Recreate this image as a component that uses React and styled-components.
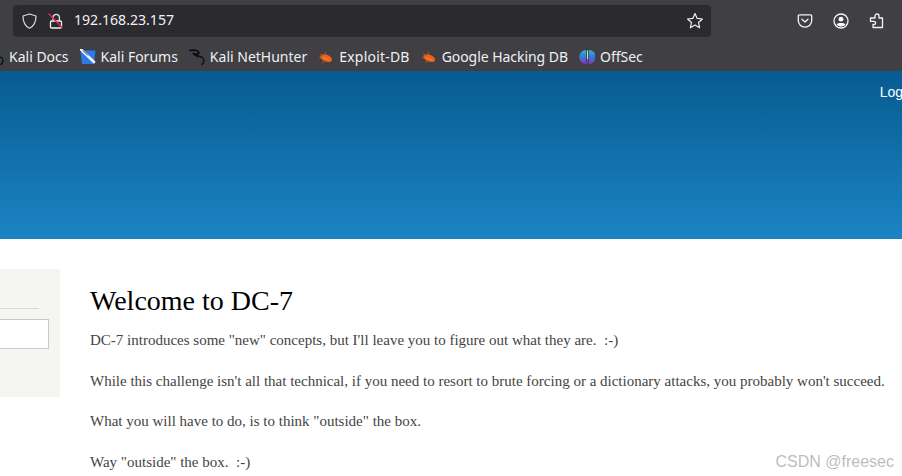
import React from 'react';
import styled, { createGlobalStyle } from 'styled-components';

const Global = createGlobalStyle`
  html, body { margin: 0; padding: 0; background: #fff; overflow: hidden; }
`;

const Page = styled.div`
  position: relative;
  width: 902px;
  height: 476px;
  overflow: hidden;
  display: flex;
  flex-direction: column;
`;

const Browser = styled.div`
  height: 71px;
  flex: none;
  background: #3f3f44;
  color: #fbfbfe;
  font-family: "Noto Sans", "Open Sans", sans-serif;
`;

const TopBar = styled.div`
  height: 42px;
  display: flex;
  align-items: center;
  padding: 0 17px 0 13px;
`;

const UrlBar = styled.div`
  width: 698px;
  height: 32px;
  margin-top: -1px;
  box-sizing: border-box;
  background: #2b2a2f;
  border-radius: 4px;
  display: flex;
  align-items: center;
  padding: 0 7px 0 8px;
`;

const UrlText = styled.span`
  font-size: 14.1px;
  line-height: 20px;
  margin: -2px 0 0 9px;
  flex: 1;
  color: #f2f2f5;
`;

const ToolIcons = styled.div`
  display: flex;
  align-items: center;
  gap: 20px;
  margin-left: auto;
`;

const Bookmarks = styled.div`
  height: 29px;
  display: flex;
  align-items: center;
  margin-left: -9px;
  gap: 11px;
  font-size: 14px;
`;

const Bookmark = styled.div`
  display: flex;
  align-items: center;
  gap: 5px;
  white-space: nowrap;
`;

const BookmarkLabel = styled.span`
  letter-spacing: ${(props) => props.$tracking || 0}px;
  color: #f0f0f3;
`;

const Header = styled.header`
  height: 168px;
  flex: none;
  display: flex;
  justify-content: flex-end;
  background: linear-gradient(to bottom, #075b91, #1c84c4);
  font-family: "Liberation Sans", sans-serif;
  font-size: 14px;
  color: #fff;
`;

const LogLink = styled.span`
  margin: 13px -1px 0 0;
`;

const Main = styled.main`
  display: flex;
  padding-top: 30px;
  gap: 30px;
  font-family: "Liberation Serif", serif;
`;

const Sidebar = styled.aside`
  width: 60px;
  height: 128px;
  flex: none;
  background: #f5f5f2;
  box-sizing: border-box;
  padding: 39px 11px 0 0;
`;

const Rule = styled.div`
  height: 1px;
  background: #d8d8d4;
  margin-right: 10px;
`;

const SearchInput = styled.div`
  height: 30px;
  margin-top: 10px;
  box-sizing: border-box;
  background: #fff;
  border: 1px solid #c8c8c8;
  border-left: none;
`;

const Content = styled.article`
  flex: 1;
  min-width: 0;
  padding-top: 15px;
`;

const Title = styled.h1`
  margin: 0;
  font-weight: 400;
  font-size: 28px;
  line-height: 34px;
  color: #000;
`;

const Para = styled.p`
  margin: 0 -20px 16.67px 0;
  font-size: 15px;
  line-height: 24px;
  color: #444;
  white-space: pre-wrap;
  &:first-of-type { margin-top: 10px; }
`;

const Watermark = styled.div`
  position: absolute;
  right: 8px;
  bottom: 5px;
  font-family: "Liberation Sans", sans-serif;
  font-size: 16px;
  color: rgba(120, 120, 120, 0.5);
`;

const Shield = () => (
  <svg width="17" height="18" viewBox="0 0 17 18" fill="none" stroke="#dcdce0" strokeWidth="1.2">
    <path d="M8.5 2 L15 4 C15 10 13.5 14 8.5 16.3 C3.5 14 2 10 2 4 Z" strokeLinejoin="round" />
  </svg>
);

const BrokenLock = () => (
  <svg width="18" height="18" viewBox="0 0 18 18" fill="none" style={{ marginLeft: 9 }}>
    <path d="M6 8.5 V5.5 A3.2 3.2 0 0 1 12.4 5.5 V8.5" stroke="#e8e8ec" strokeWidth="1.3" />
    <rect x="3.5" y="9" width="11" height="7" rx="1.2" stroke="#f4f4f7" strokeWidth="1.3" />
    <path d="M1.5 1.5 L15.5 16" stroke="#e22850" strokeWidth="1.4" />
  </svg>
);

const Star = () => (
  <svg width="18" height="18" viewBox="0 0 18 18" fill="none" stroke="#f0f0f3" strokeWidth="1.2" strokeLinejoin="round">
    <path d="M9 1.6 L11.2 6.4 L16.4 7 L12.5 10.5 L13.6 15.7 L9 13.1 L4.4 15.7 L5.5 10.5 L1.6 7 L6.8 6.4 Z" />
  </svg>
);

const Pocket = () => (
  <svg width="16" height="16" viewBox="0 0 16 16" fill="none" stroke="#f4f4f7" strokeWidth="1.3" strokeLinecap="round" strokeLinejoin="round">
    <path d="M2.3 1.8 H13.7 A1 1 0 0 1 14.7 2.8 V7.5 A6.7 6.7 0 0 1 1.3 7.5 V2.8 A1 1 0 0 1 2.3 1.8 Z" />
    <path d="M5 6.2 L8 9 L11 6.2" />
  </svg>
);

const Account = () => (
  <svg width="16" height="16" viewBox="0 0 16 16" fill="none">
    <circle cx="8" cy="8" r="7" stroke="#f4f4f7" strokeWidth="1.3" />
    <circle cx="8" cy="6.2" r="2.4" fill="#fbfbfe" />
    <path d="M3.6 11.5 C5 9.6 11 9.6 12.4 11.5 C11 13 9.5 13.6 8 13.6 C6.5 13.6 5 13 3.6 11.5 Z" fill="#fbfbfe" />
  </svg>
);

const Puzzle = () => (
  <svg width="16" height="16" viewBox="0 0 16 16" fill="none" stroke="#f4f4f7" strokeWidth="1.3" strokeLinejoin="round">
    <path d="M1.5 5 H6 V3 A2 2 0 0 1 10 3 V5 H13.5 V14.5 H4 V11.5 H5 A1.6 1.6 0 0 0 5 8.3 H1.5 Z" />
  </svg>
);

const Dragon = ({ width = 16 }) => (
  <svg width={width} height="18" viewBox={`${16 - width} 0 ${width} 18`} fill="none" stroke="#0a0a0a" strokeLinecap="round">
    <path d="M0.5 2.5 L5 2 C7 2 9 3 10 4.5 C10.5 6 8 6.5 5 6" strokeWidth="1.4" />
    <path d="M5 6.5 C8 8 12 8 14 10 C15.6 12 15 14.5 13 16.5" strokeWidth="1.2" />
    <path d="M4 4.5 C5 7 7 8.5 9 9" strokeWidth="1" />
  </svg>
);

const ForumIcon = () => (
  <svg width="16" height="16" viewBox="0 0 16 16">
    <path d="M3 1.5 H15.5 L14 15 H2 L0.5 3 Z" fill="#2c7be5" />
    <path d="M1 0.5 L14 13" stroke="#f4f7fb" strokeWidth="2.6" strokeLinecap="round" />
    <path d="M3 1.5 L8 6.5" stroke="#1b3a5e" strokeWidth="0.9" />
  </svg>
);

const ExploitIcon = () => (
  <svg width="16" height="16" viewBox="0 0 16 16">
    <ellipse cx="8.2" cy="9.2" rx="6.2" ry="3.4" transform="rotate(22 8.2 9.2)" fill="#e9611c" />
    <path d="M2 5 L5.5 7 M7 2.5 L8 6 M1 9 L4 9.5 M4 14 L7 12" stroke="#a8511f" strokeWidth="1" />
    <path d="M5 8.5 L11 11" stroke="#f58a45" strokeWidth="1" />
  </svg>
);

const OffSecIcon = () => (
  <svg width="16" height="16" viewBox="0 0 16 16">
    <defs>
      <linearGradient id="offsec" x1="0" y1="0" x2="0" y2="1">
        <stop offset="0" stopColor="#2fb8c8" />
        <stop offset="0.55" stopColor="#3a72d8" />
        <stop offset="1" stopColor="#8a35c9" />
      </linearGradient>
    </defs>
    <path d="M7.2 1 A7 7 0 0 0 7.2 15 Z" fill="url(#offsec)" />
    <path d="M9.8 1 A7 7 0 0 1 9.8 15 Z" fill="url(#offsec)" />
    <rect x="8" y="1.5" width="1" height="9" fill="#d8d8e4" />
    <rect x="8" y="10.5" width="1" height="4" fill="#7a3cd0" />
  </svg>
);

const bookmarks = [
  { label: 'Kali Docs', icon: <Dragon width={13} /> },
  { label: 'Kali Forums', icon: <ForumIcon /> },
  { label: 'Kali NetHunter', icon: <Dragon /> },
  { label: 'Exploit-DB', icon: <ExploitIcon />, tracking: 0.2 },
  { label: 'Google Hacking DB', icon: <ExploitIcon />, tracking: -0.05 },
  { label: 'OffSec', icon: <OffSecIcon /> },
];

export default function App() {
  return (
    <Page>
      <Global />
      <Browser>
        <TopBar>
          <UrlBar>
            <Shield />
            <BrokenLock />
            <UrlText>192.168.23.157</UrlText>
            <Star />
          </UrlBar>
          <ToolIcons>
            <Pocket />
            <Account />
            <Puzzle />
          </ToolIcons>
        </TopBar>
        <Bookmarks>
          {bookmarks.map((b) => (
            <Bookmark key={b.label}>
              {b.icon}
              <BookmarkLabel $tracking={b.tracking}>{b.label}</BookmarkLabel>
            </Bookmark>
          ))}
        </Bookmarks>
      </Browser>
      <Header>
        <LogLink>Log</LogLink>
      </Header>
      <Main>
        <Sidebar>
          <Rule />
          <SearchInput />
        </Sidebar>
        <Content>
          <Title>Welcome to DC-7</Title>
          <Para>DC-7 introduces some "new" concepts, but I'll leave you to figure out what they are.  :-)</Para>
          <Para>While this challenge isn't all that technical, if you need to resort to brute forcing or a dictionary attacks, you probably won't succeed.</Para>
          <Para>What you will have to do, is to think "outside" the box.</Para>
          <Para>Way "outside" the box.  :-)</Para>
        </Content>
      </Main>
      <Watermark>CSDN @freesec</Watermark>
    </Page>
  );
}
